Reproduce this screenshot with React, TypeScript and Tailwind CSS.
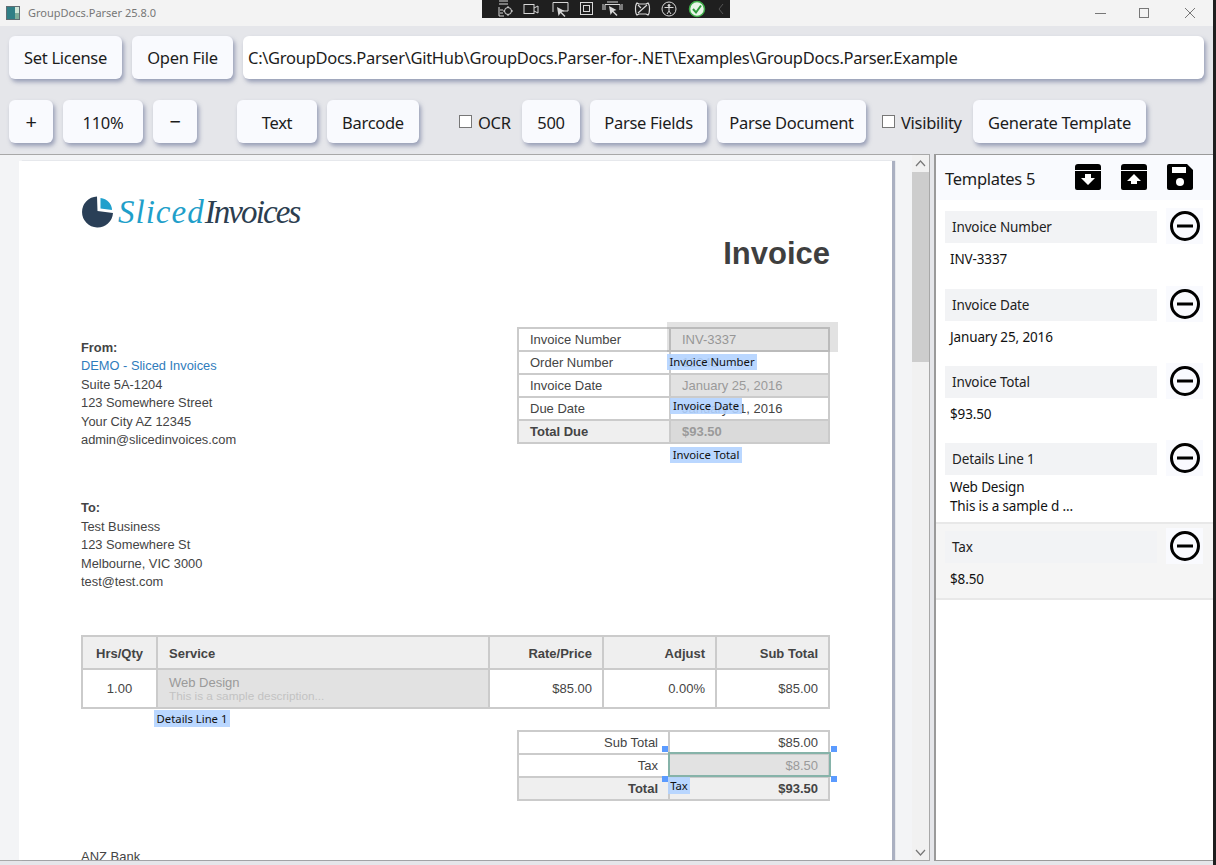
import type { ReactNode } from 'react'

const ui = { fontFamily: '"Noto Sans", sans-serif' }
const doc = { fontFamily: '"Liberation Sans", Arial, sans-serif' }

function Btn({ children, w, low }: { children: ReactNode; w: string; low?: boolean }) {
  return (
    <div className={`${w} h-[43px] shrink-0 flex items-center justify-center rounded-md bg-[#f9fafe] text-[16.5px] tracking-[-0.29px] text-[#1c1c1c] shadow-[2px_3px_4px_rgba(90,100,140,0.55)] ${low ? 'pt-[3px]' : 'pt-[1px]'}`}>
      {children}
    </div>
  )
}

function Check({ label, w }: { label: string; w: string }) {
  return (
    <div className={`${w} shrink-0 flex items-center gap-[6px] text-[16.5px] tracking-[-0.29px] text-[#1c1c1c]`}>
      <div className="w-[13px] h-[13px] shrink-0 bg-white border border-[#777]" />
      <span className="pt-[3px]">{label}</span>
    </div>
  )
}

function DebugIcons() {
  return (
    <svg width="248" height="18" viewBox="0 0 248 18" fill="none" stroke="#d8d8d8" strokeWidth="1">
      <path d="M17 1h9M17 4h9M17 7v9h5M18 10h3M18 13h3" />
      <circle cx="26" cy="11" r="3.5" />
      <path d="M26 6v1.5M26 14.5V16M21 11h1.5M29.5 11H31" />
      <rect x="42" y="4.5" width="10" height="9" />
      <path d="M52 8l4-2v7l-4-2" />
      <path d="M71 12V2.5h15V11h-5" />
      <path d="M75 7l1.5 9 2-3 4 4 1-1-4-4 3-1z" fill="#d8d8d8" stroke="none" />
      <rect x="98.500" y="2.500" width="12" height="12" />
      <rect x="101.500" y="5.500" width="6" height="6" />
      <path d="M123 10V4.500h15V10M125 2h11M121 4v6M140 4v6" />
      <path d="M127 6l1.500 9 2-3 4 4 1-1-4-4 3-1z" fill="#d8d8d8" stroke="none" />
      <path d="M155 3c-2 2-2 10 0 12l2-1h7l2 1c2-2 2-10 0-12l-2 1h-7zM156 13l9-8M156 5l3 3" strokeWidth="1.200" />
      <circle cx="187" cy="9" r="7" />
      <circle cx="187" cy="5.500" r="1" fill="#d8d8d8" />
      <path d="M182.500 7.500h9M187 8v3M187 11l-2 3M187 11l2 3" />
      <circle cx="215" cy="9" r="7.500" fill="#e8f5e8" stroke="#3fae49" strokeWidth="1.500" />
      <path d="M211 9l3 3.500 5-7" stroke="#2e9a3c" strokeWidth="2" />
      <path d="M241 4l-4 5 4 5" stroke="#555" />
    </svg>
  )
}

function TitleBar() {
  return (
    <div className="relative h-[26px] shrink-0 bg-[#f3f3f3] flex items-center pl-[6px]">
      <svg width="14" height="14" viewBox="0 0 14 14">
        <rect width="14" height="14" fill="#5f6d73" />
        <rect x="1" y="1" width="8" height="12" fill="#2f7f86" />
        <rect x="9" y="1" width="4" height="6" fill="#cfe6d8" />
        <rect x="9" y="7" width="4" height="6" fill="#7fae9a" />
      </svg>
      <span className="ml-[8px] text-[11px] text-[#777]">GroupDocs.Parser 25.8.0</span>
      <div className="absolute left-[482px] top-0 h-[18px] w-[248px] bg-[#1f1f1f]">
        <DebugIcons />
      </div>
      <svg className="absolute left-[1094px] top-[6px]" width="106" height="14" viewBox="0 0 106 14" fill="none" stroke="#777" strokeWidth="1">
        <path d="M1 7.500h11" />
        <rect x="45.500" y="2.500" width="9" height="9" />
        <path d="M91 2l10 10M101 2L91 12" />
      </svg>
    </div>
  )
}

function Toolbar() {
  return (
    <div className="h-[128px] shrink-0 bg-[#e5e6ea] px-[9px] pt-[10px]">
      <div className="flex gap-[10px] h-[43px]">
        <Btn w="w-[113px]">Set License</Btn>
        <Btn w="w-[101px]">Open File</Btn>
        <div className="w-[961px] flex items-center rounded-md bg-white pl-[5px] pt-[1px] text-[16.5px] tracking-[-0.29px] text-[#1c1c1c] shadow-[2px_3px_4px_rgba(90,100,140,0.55)]">
          C:\GroupDocs.Parser\GitHub\GroupDocs.Parser-for-.NET\Examples\GroupDocs.Parser.Example
        </div>
      </div>
      <div className="flex items-center mt-[21px] h-[43px]">
        <Btn w="w-[44px]"><span className="text-[20px]">+</span></Btn>
        <div className="w-[10px]" />
        <Btn low w="w-[80px]">110%</Btn>
        <div className="w-[10px]" />
        <Btn w="w-[44px]"><span className="text-[20px]">−</span></Btn>
        <div className="w-[40px]" />
        <Btn low w="w-[80px]">Text</Btn>
        <div className="w-[10px]" />
        <Btn low w="w-[92px]">Barcode</Btn>
        <div className="w-[40px]" />
        <Check w="w-[53px]" label="OCR" />
        <div className="w-[10px]" />
        <Btn low w="w-[58px]">500</Btn>
        <div className="w-[10px]" />
        <Btn low w="w-[117px]">Parse Fields</Btn>
        <div className="w-[10px]" />
        <Btn low w="w-[149px]">Parse Document</Btn>
        <div className="w-[16px]" />
        <Check w="w-[81px]" label="Visibility" />
        <div className="w-[10px]" />
        <Btn low w="w-[173px]">Generate Template</Btn>
      </div>
    </div>
  )
}

const td = 'border-2 border-[#cbcbcb] px-[11px]'
const tdRight = 'border-2 border-[#cbcbcb] pl-[11px] pr-[10px] text-right'
const fieldBg = 'bg-[#e2e2e2] text-[#9a9a9a]'

function InfoTable() {
  const rows: [string, string, string][] = [
    // first row's value cell gets its grey from the selection overlay
    ['Invoice Number', 'INV-3337', 'text-[#9a9a9a]'],
    ['Order Number', '12345', ''],
    ['Invoice Date', 'January 25, 2016', fieldBg],
    ['Due Date', 'January 31, 2016', ''],
  ]
  return (
    <table className="w-[313px] table-fixed border-collapse text-[13px] text-[#444]">
      <tbody>
        {rows.map(([k, v, cls]) => (
          <tr key={k} className="h-[23px]">
            <td className={`${td} w-[152px] leading-[17px]`}>{k}</td>
            <td className={`${td} leading-[17px] ${cls}`}>{v}</td>
          </tr>
        ))}
        <tr className="h-[23px] font-bold">
          <td className={`${td} leading-[17px] bg-[#efefef]`}>Total Due</td>
          <td className={`${td} leading-[17px] bg-[#dadada] text-[#9a9a9a]`}>$93.50</td>
        </tr>
      </tbody>
    </table>
  )
}

function ServiceTable() {
  return (
    <table className="w-[749px] table-fixed border-collapse text-[13px] text-[#444]">
      <tbody>
        <tr className="h-[33px] bg-[#efefef] font-bold">
          <td className={`${td} w-[75px] pt-[2px] text-center`}>Hrs/Qty</td>
          <td className={`${td} w-[332px] pt-[2px]`}>Service</td>
          <td className={`${tdRight} w-[114px] pt-[2px]`}>Rate/Price</td>
          <td className={`${tdRight} w-[113px] pt-[2px]`}>Adjust</td>
          <td className={`${tdRight} pt-[2px]`}>Sub Total</td>
        </tr>
        <tr className="h-[38.500px]">
          <td className={`${td} text-center`}>1.00</td>
          <td className={`${td} bg-[#e2e2e2] leading-[15px]`}>
            <div className="text-[#9a9a9a]">Web Design</div>
            <div className="text-[11.800px] leading-[13px] text-[#c2c2c2]">This is a sample description...</div>
          </td>
          <td className={tdRight}>$85.00</td>
          <td className={tdRight}>0.00%</td>
          <td className={tdRight}>$85.00</td>
        </tr>
      </tbody>
    </table>
  )
}

function TotalsTable() {
  return (
    <table className="w-[313px] table-fixed border-collapse text-[13px] text-[#444]">
      <tbody>
        <tr className="h-[23px]">
          <td className={`${tdRight} w-[151px] leading-[17px]`}>Sub Total</td>
          <td className={`${tdRight} leading-[17px]`}>$85.00</td>
        </tr>
        <tr className="h-[23px]">
          <td className={`${tdRight} leading-[17px]`}>Tax</td>
          <td className={`${tdRight} leading-[17px] ${fieldBg}`}>$8.50</td>
        </tr>
        <tr className="h-[23px] bg-[#efefef] font-bold">
          <td className={`${tdRight} leading-[17px]`}>Total</td>
          <td className={`${tdRight} leading-[17px]`}>$93.50</td>
        </tr>
      </tbody>
    </table>
  )
}

function Tag({ className, children }: { className: string; children: ReactNode }) {
  return (
    <div style={ui} className={`absolute flex items-center justify-center bg-[#b3d3ff]/90 text-[11.300px] leading-none text-[#111] whitespace-nowrap ${className}`}>
      {children}
    </div>
  )
}

function Handle({ className }: { className: string }) {
  return <div className={`absolute w-[6px] h-[6px] bg-[#5b9bff] ${className}`} />
}

function Logo() {
  return (
    <div className="flex items-center h-[33px] pl-[1px]">
      <svg width="33" height="33" viewBox="0 0 33 33">
        <path d="M15 0.500A15.500 15.500 0 1 0 31 17L15.500 15z" fill="#2a3f57" />
        <path d="M18.500 2v10.500l11.500 1.500C30 8 25 2.500 18.500 2z" fill="#1fa0cc" />
      </svg>
      <span className="ml-[3px] text-[33px] leading-none italic tracking-[1px] text-[#1f9fca]" style={{ fontFamily: '"Liberation Serif", serif' }}>Sliced</span>
      <span className="text-[33px] leading-none italic tracking-[-1.900px] text-[#2c3e50]" style={{ fontFamily: '"Liberation Serif", serif' }}>Invoices</span>
    </div>
  )
}

function InvoicePage() {
  return (
    <div style={doc} className="relative w-[873px] h-[699px] overflow-hidden bg-white pl-[62px] pr-[62px] pt-[35px] text-[13px] leading-[18.4px] text-[#444]">
      <Logo />
      <div className="mt-[7px] text-right text-[31px] leading-[36px] font-bold text-[#3f3f3f]">Invoice</div>
      <div className="mt-[55px] flex justify-between items-start">
        <div className="pt-[12px] text-[12.850px]">
          <div className="font-bold">From:</div>
          <div className="text-[#2f7cbc]">DEMO - Sliced Invoices</div>
          <div>Suite 5A-1204</div>
          <div>123 Somewhere Street</div>
          <div>Your City AZ 12345</div>
          <div>admin@slicedinvoices.com</div>
          <div className="mt-[50px] font-bold">To:</div>
          <div>Test Business</div>
          <div>123 Somewhere St</div>
          <div>Melbourne, VIC 3000</div>
          <div>test@test.com</div>
        </div>
        <InfoTable />
      </div>
      <div className="mt-[44px]">
        <ServiceTable />
      </div>
      <div className="mt-[21px] flex justify-end">
        <TotalsTable />
      </div>
      <div className="mt-[47px]">ANZ Bank</div>

      {/* template field overlays */}
      <div className="absolute left-[648px] top-[161px] w-[171px] h-[30px] bg-[#8c8c8c]/25" />
      <Tag className="left-[648px] top-[193px] w-[90px] h-[16px]">Invoice Number</Tag>
      <Tag className="left-[651px] top-[237px] w-[72px] h-[16px]">Invoice Date</Tag>
      <Tag className="left-[651px] top-[286px] w-[72px] h-[16px]">Invoice Total</Tag>
      <Tag className="left-[135px] top-[549px] w-[76px] h-[17px]">Details Line 1</Tag>
      <Tag className="left-[649px] top-[616px] w-[22px] h-[17px]">Tax</Tag>
      <div className="absolute left-[649px] top-[591px] w-[163px] h-[25px] border-2 border-[#86b3a9]" />
      <Handle className="left-[643px] top-[585px]" />
      <Handle className="left-[812px] top-[585px]" />
      <Handle className="left-[643px] top-[615px]" />
      <Handle className="left-[812px] top-[615px]" />
    </div>
  )
}

function Scrollbar() {
  return (
    <div className="w-[17px] h-full bg-[#f1f1f1] flex flex-col items-center">
      <svg className="mt-[5px]" width="11" height="7" viewBox="0 0 11 7" fill="none" stroke="#777" strokeWidth="1.200"><path d="M1 6l4.500-5L10 6" /></svg>
      <div className="mt-[5px] w-full h-[190px] bg-[#cdcdcd]" />
      <div className="flex-1" />
      <svg className="mb-[4px]" width="11" height="7" viewBox="0 0 11 7" fill="none" stroke="#777" strokeWidth="1.200"><path d="M1 1l4.500 5L10 1" /></svg>
    </div>
  )
}

function ArchiveIcon({ up }: { up?: boolean }) {
  return (
    <svg width="28" height="28" viewBox="0 0 28 28">
      <path d="M4 1h20a3 3 0 0 1 3 3v3H1V4a3 3 0 0 1 3-3z" fill="#000" />
      <path d="M1 8h26v17a2 2 0 0 1-2 2H3a2 2 0 0 1-2-2z" fill="#000" />
      <path d={up ? 'M14 11l7 7h-4v3h-6v-3H7z' : 'M11 11h6v4h4l-7 7-7-7h4z'} fill="#fff" />
    </svg>
  )
}

function SaveIcon() {
  return (
    <svg width="28" height="28" viewBox="0 0 28 28">
      <path d="M3 1h18l6 6v18a2 2 0 0 1-2 2H3a2 2 0 0 1-2-2V3a2 2 0 0 1 2-2z" fill="#000" />
      <rect x="6" y="4" width="14" height="6" fill="#fff" />
      <circle cx="14" cy="19" r="4" fill="#fff" />
    </svg>
  )
}

function TemplateItem({ label, children, selected, h, valueTop = 'mt-[7px]' }: { label: string; children: ReactNode; selected?: boolean; h: string; valueTop?: string }) {
  return (
    <div className={`${h} pl-[9px] ${selected ? 'bg-[#f5f5f5] border-y-2 border-[#e8e8e8] pt-[7px]' : 'pt-[11px]'}`}>
      <div className="relative flex">
        <div className="w-[212px] h-[32px] bg-[#f2f3f5] flex items-center pl-[7px] pt-[1px] text-[13.500px] tracking-[-0.14px] text-[#222]">{label}</div>
        <div className="absolute left-[221px] top-[-3px] w-[37px] h-[36px] bg-[#f9fafe] flex items-center justify-center">
          <svg width="32" height="32" viewBox="0 0 32 32" fill="none" stroke="#000" strokeWidth="3">
            <circle cx="16" cy="16" r="13.500" />
            <path d="M8 16h16" />
          </svg>
        </div>
      </div>
      <div className={`${valueTop} pl-[5px] text-[13.500px] tracking-[-0.14px] leading-[19px] text-[#111]`}>{children}</div>
    </div>
  )
}

function TemplatesPanel() {
  return (
    <div style={ui} className="w-[279px] h-full shrink-0 bg-white border-l-2 border-t border-[#9a9a9a]">
      <div className="h-[45px] bg-[#f9fafe] flex items-center pl-[9px] pt-[4px] relative">
        <span className="text-[16.500px] tracking-[-0.29px] text-[#1c1c1c]">Templates 5</span>
        <div className="absolute left-[138px] top-[8px]"><ArchiveIcon /></div>
        <div className="absolute left-[184px] top-[8px]"><ArchiveIcon up /></div>
        <div className="absolute left-[230px] top-[8px]"><SaveIcon /></div>
      </div>
      <TemplateItem h="h-[77.500px]" label="Invoice Number">INV-3337</TemplateItem>
      <TemplateItem h="h-[77.500px]" label="Invoice Date">January 25, 2016</TemplateItem>
      <TemplateItem h="h-[77px]" label="Invoice Total">$93.50</TemplateItem>
      <TemplateItem h="h-[90px]" valueTop="mt-[3px]" label="Details Line 1">
        <div>Web Design</div>
        <div>This is a sample d ...</div>
      </TemplateItem>
      <TemplateItem h="h-[78px]" selected label="Tax">$8.50</TemplateItem>
    </div>
  )
}

export default function App() {
  return (
    <div style={ui} className="w-[1216px] h-[865px] overflow-hidden flex bg-[#1f1f1f]">
      <div className="w-[1213px] h-full shrink-0 flex flex-col bg-[#e5e6ea]">
        <TitleBar />
        <Toolbar />
        <div className="flex h-[707px] shrink-0">
          <div className="w-[930px] h-full shrink-0 bg-[#f3f4f6] border-y border-r-2 border-[#a8a8a8] flex items-start">
            <div className="pl-[19px] pt-[6px] h-full">
              <div className="shadow-[3px_0_1px_rgba(110,120,150,0.55)]">
                <InvoicePage />
              </div>
            </div>
            <div className="ml-[20px] h-full">
              <Scrollbar />
            </div>
          </div>
          <div className="w-[4px] shrink-0" />
          <div className="border-b border-[#9a9a9a] h-full flex-1 flex bg-white">
            <TemplatesPanel />
          </div>
        </div>
        <div className="flex-1 bg-[#e5e6ea]" />
      </div>
    </div>
  )
}
